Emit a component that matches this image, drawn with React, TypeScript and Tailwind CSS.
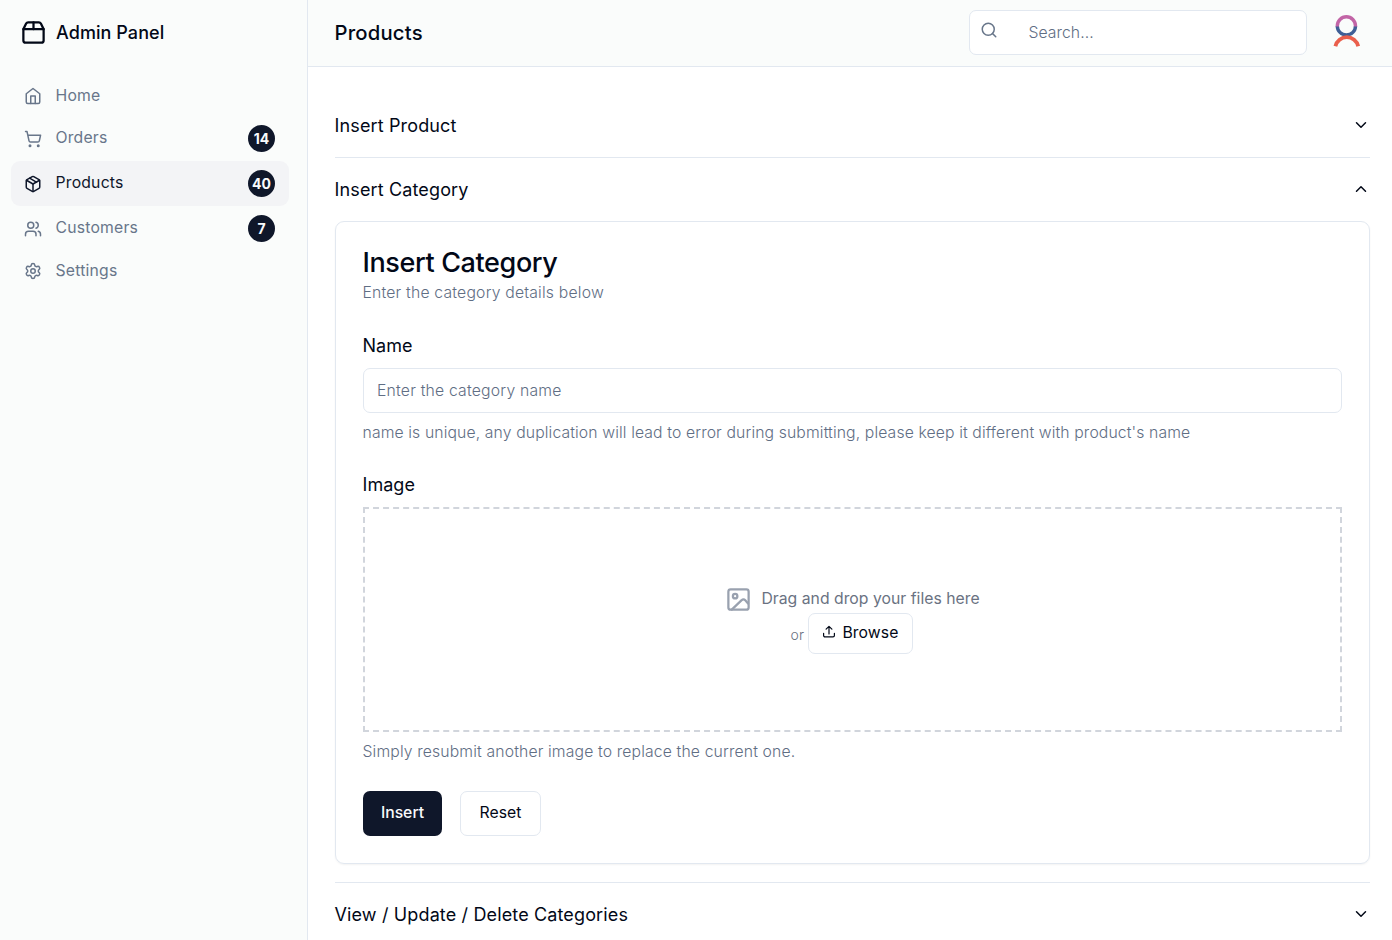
import { ChevronDown, ChevronUp, Package, Search, Settings, ShoppingCart, Users } from 'lucide-react';
import clsx from 'clsx';
import { useState } from 'react';
import type { ReactNode } from 'react';

interface IconProps {
  size?: number;
  className?: string;
}

function HomeIcon({ size = 18, className }: IconProps) {
  return (
    <svg
      width={size}
      height={size}
      className={className}
      viewBox="0 0 24 24"
      fill="none"
      stroke="currentColor"
      strokeWidth="2"
      strokeLinecap="round"
      strokeLinejoin="round"
    >
      <path d="m3 9 9-7 9 7v11a2 2 0 0 1-2 2H5a2 2 0 0 1-2-2z" />
      <path d="M9 22V12h6v10" />
    </svg>
  );
}

const navItems = [
  { label: 'Home', icon: HomeIcon },
  { label: 'Orders', icon: ShoppingCart, count: 14 },
  { label: 'Products', icon: Package, count: 40 },
  { label: 'Customers', icon: Users, count: 7 },
  { label: 'Settings', icon: Settings },
];

function BoxLogo() {
  return (
    <svg
      className="size-[27px] shrink-0 text-[#020817]"
      viewBox="0 0 24 24"
      fill="none"
      stroke="currentColor"
      strokeWidth="2"
      strokeLinecap="round"
      strokeLinejoin="round"
    >
      <path d="M3 9h18v10a2 2 0 0 1-2 2H5a2 2 0 0 1-2-2V9Z" />
      <path d="m3 9 2.45-4.9A2 2 0 0 1 7.24 3h9.52a2 2 0 0 1 1.8 1.1L21 9" />
      <path d="M12 3v6" />
    </svg>
  );
}

function ImageIcon() {
  return (
    <svg
      className="size-[27px] shrink-0 text-gray-400"
      viewBox="0 0 24 24"
      fill="none"
      stroke="currentColor"
      strokeWidth="2"
      strokeLinecap="round"
      strokeLinejoin="round"
    >
      <rect width="18" height="18" x="3" y="3" rx="2" ry="2" />
      <circle cx="9" cy="9" r="2" />
      <path d="M20.5 15.5 18 12.6a2.2 2.2 0 0 0-3.2 0L6 21" />
    </svg>
  );
}

function UploadIcon() {
  return (
    <svg
      className="-mt-0.5 size-[14px] shrink-0"
      viewBox="0 0 14 14"
      fill="none"
      stroke="currentColor"
      strokeWidth="1.2"
      strokeLinecap="round"
      strokeLinejoin="round"
    >
      <path d="M4.1 4.2 7 1.3l2.9 2.9M7 1.5v7.4" />
      <path d="M1.6 8.3v2.2A1.4 1.4 0 0 0 3 11.9h8a1.4 1.4 0 0 0 1.4-1.4V8.3" />
    </svg>
  );
}

function Avatar() {
  return (
    <svg className="h-9 w-9 shrink-0" viewBox="0 0 36 36" fill="none">
      <path d="M8.3 12.9a9.1 9.1 0 0 0 18.2 0" stroke="#3f5f96" strokeWidth="3.4" />
      <path d="M8.3 13.6v-.7a9.1 9.1 0 0 1 18.2 0v.7" stroke="#c265a6" strokeWidth="3.4" />
      <path d="M6.4 33.2a11.7 11.7 0 0 1 22.8 0" stroke="#ea5f4c" strokeWidth="3.8" />
    </svg>
  );
}

function Sidebar() {
  return (
    <aside className="w-[308px] shrink-0 border-r border-slate-200 bg-[#fafcfb]">
      <div className="flex h-[65px] items-center gap-[9px] pl-5">
        <BoxLogo />
        <span className="text-[18px] font-medium tracking-[0.07px]">Admin Panel</span>
      </div>
      <nav className="mt-[10px] flex flex-col pr-[18px] pl-[11px]">
        {navItems.map(({ label, icon: Icon, count }) => (
          <a
            key={label}
            href="#"
            className={clsx(
              'flex items-center gap-[13.5px] rounded-[9px] pr-[14px] pl-[13px]',
              count ? 'h-[45px]' : 'h-[41px]',
              label === 'Products' ? 'bg-[#f3f4f6] text-slate-900' : 'text-[#68768a]'
            )}
          >
            <Icon size={18} className={label === 'Settings' ? '-mt-px' : 'mt-px'} />
            <span className={clsx('text-[15.75px] tracking-[0.2px]', label !== 'Home' && '-mt-0.5')}>{label}</span>
            {count && (
              <span className="ml-auto flex size-[27px] items-center justify-center rounded-full bg-[#0f172a] text-[14px] font-bold text-slate-50">
                {count}
              </span>
            )}
          </a>
        ))}
      </nav>
    </aside>
  );
}

interface SectionProps {
  title: string;
  open: boolean;
  onToggle: () => void;
  children?: ReactNode;
}

function Section({ title, open, onToggle, children }: SectionProps) {
  const Chevron = open ? ChevronUp : ChevronDown;

  return (
    <section className="border-b border-slate-200">
      <button
        onClick={onToggle}
        className="flex h-[63px] w-full items-center justify-between text-left text-[18px] tracking-[0.14px]"
      >
        <span className="-ml-[0.5px]">{title}</span>
        <Chevron size={18} className="-mt-0.5" />
      </button>
      {open && children && <div className="pb-[18px]">{children}</div>}
    </section>
  );
}

function CategoryForm() {
  const [name, setName] = useState('');

  return (
    <form
      onSubmit={(e) => e.preventDefault()}
      className="h-[643px] rounded-[9px] border border-slate-200 px-[27px] pt-[27px] shadow-xs"
    >
      <h2 className="-ml-[0.5px] text-[27px] leading-[27px] font-medium tracking-[-0.38px]">Insert Category</h2>
      <p className="-ml-[0.5px] mt-[6px] text-[15.75px] leading-[22px] font-light tracking-[0.19px] text-[#5f6e84]">
        Enter the category details below
      </p>

      <label className="-ml-[0.5px] mt-[28px] block text-[18px] leading-[27px] tracking-[0.05px]">Name</label>
      <input
        value={name}
        onChange={(e) => setName(e.target.value)}
        placeholder="Enter the category name"
        className="mt-[9px] block h-[45px] w-full rounded-[7px] border border-slate-200 px-[13px] text-[15.75px] font-light tracking-[0.2px] outline-none placeholder:text-[#5f6e84]"
      />
      <p className="-ml-[0.5px] mt-[9px] text-[15.75px] leading-[22px] font-light tracking-[0.12px] text-[#5f6e84]">
        name is unique, any duplication will lead to error during submitting, please keep it different with product's name
      </p>

      <label className="-ml-[0.5px] mt-[27px] block text-[18px] leading-[27px] tracking-[0.05px]">Image</label>
      <div className="mt-[9px] flex h-[225px] flex-col items-center justify-center border-2 border-dashed border-gray-300 text-gray-500">
        <div className="flex items-center gap-[9px]">
          <ImageIcon />
          <span className="text-[15.75px] tracking-[0.02px]">Drag and drop your files here</span>
        </div>
        <div className="mr-[1.5px] flex items-center gap-1">
          <span className="mt-0.5 text-[14px] font-light">or</span>
          <button
            type="button"
            className="flex h-[41px] w-[105px] items-center gap-[6.5px] rounded-[7px] border border-slate-200 pl-[13px] text-[15.75px] tracking-[0.1px] text-[#020817]"
          >
            <UploadIcon />
            Browse
          </button>
        </div>
      </div>
      <p className="-ml-[0.5px] mt-[9px] text-[15.75px] leading-[22px] font-light tracking-[0.14px] text-[#5f6e84]">
        Simply resubmit another image to replace the current one.
      </p>

      <div className="mt-[28px] flex gap-[18px]">
        <button
          type="submit"
          className="h-[45px] w-[79px] rounded-[7px] bg-[#0f172a] pb-0.5 text-[15.75px] font-medium text-slate-50"
        >
          Insert
        </button>
        <button
          type="reset"
          onClick={() => setName('')}
          className="h-[45px] w-[81px] rounded-[7px] border border-slate-200 pb-0.5 text-[15.75px] tracking-[0.1px]"
        >
          Reset
        </button>
      </div>
    </form>
  );
}

export default function App() {
  const [openSection, setOpenSection] = useState('category');

  const toggle = (key: string) => setOpenSection((prev) => (prev === key ? '' : key));

  return (
    <div className="flex h-screen overflow-hidden bg-white font-['Inter',sans-serif] text-[#020817]">
      <Sidebar />
      <div className="flex min-w-0 flex-1 flex-col">
        <header className="flex h-[67px] shrink-0 items-center border-b border-slate-200 bg-[#fafcfb] pr-[27px] pl-[27px]">
          <h1 className="-ml-[0.5px] text-[20.25px] font-medium tracking-[0.2px]">Products</h1>
          <label className="mt-[-2px] ml-auto flex h-[45px] w-[338px] items-center rounded-[7px] border border-slate-200 bg-white pl-[10px]">
            <Search size={18} className="-mt-1 shrink-0 text-[#68768a]" />
            <input
              type="search"
              placeholder="Search..."
              className="mt-px ml-[30.5px] w-full text-[15.75px] font-light tracking-[0.05px] outline-none placeholder:text-[#5f6e84]"
            />
          </label>
          <div className="-mt-1 ml-[22px] flex">
            <Avatar />
          </div>
        </header>
        <main className="min-h-0 flex-1 overflow-hidden pt-[27px] pr-[22px] pl-[27px]">
          <Section title="Insert Product" open={openSection === 'product'} onToggle={() => toggle('product')} />
          <Section title="Insert Category" open={openSection === 'category'} onToggle={() => toggle('category')}>
            <CategoryForm />
          </Section>
          <Section title="View / Update / Delete Categories" open={openSection === 'view'} onToggle={() => toggle('view')} />
        </main>
      </div>
    </div>
  );
}
